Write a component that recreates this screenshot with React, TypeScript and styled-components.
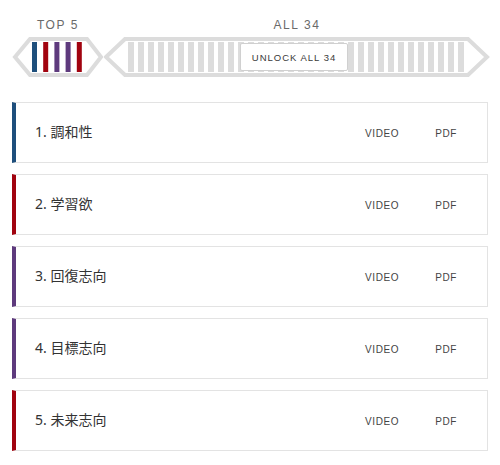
import styled, { createGlobalStyle } from "styled-components";

const GlobalStyle = createGlobalStyle`
    body {
        margin: 0;
        background: #ffffff;
        font-family: "Noto Sans", "Noto Sans CJK JP", sans-serif;
    }
`;

const Page = styled.div`
    width: 500px;
    padding: 19px 12px 0 12px;
    box-sizing: border-box;
`;

const Header = styled.div`
    display: flex;
    align-items: flex-start;
`;

const Group = styled.div<{ $width: number }>`
    width: ${props => props.$width}px;
    display: flex;
    flex-direction: column;
    align-items: center;
`;

const Label = styled.div`
    font-family: "Liberation Sans", Arial, sans-serif;
    font-size: 12px;
    line-height: 13px;
    letter-spacing: 1.6px;
    color: #6a6a6a;
    height: 13px;
    margin-bottom: 5px;
`;

const Track = styled.div`
    position: relative;
    line-height: 0;
`;

const UnlockButton = styled.button`
    position: absolute;
    left: 136px;
    top: 6px;
    width: 108px;
    height: 28px;
    background: #ffffff;
    border: 1px solid #d0d0d0;
    border-radius: 2px;
    font-family: "Liberation Sans", Arial, sans-serif;
    font-size: 9.5px;
    letter-spacing: 1px;
    color: #3a3a3a;
    padding: 0;
    cursor: pointer;
`;

const List = styled.ul`
    list-style: none;
    margin: 25px 0 0 0;
    padding: 0;
    display: flex;
    flex-direction: column;
    gap: 11px;
`;

const Card = styled.li<{ $color: string }>`
    height: 61px;
    box-sizing: border-box;
    width: 476px;
    border: 1px solid #e3e3e3;
    border-left: 4px solid ${props => props.$color};
    display: flex;
    align-items: center;
    padding: 0 30px 0 19px;
`;

const Name = styled.span`
    flex: 1;
    font-size: 14px;
    color: #333;
    margin-top: -3px;
`;

const Action = styled.a`
    font-family: "Liberation Sans", Arial, sans-serif;
    font-size: 10px;
    letter-spacing: 0.6px;
    color: #444;
    text-decoration: none;
    margin-top: 2px;
    & + & {
        margin-left: 36px;
    }
`;

const GRAY = "#dcdcdc";

interface IStrength {
    name: string;
    color: string;
}

const strengths: IStrength[] = [
    { name: "調和性", color: "#1e4f7c" },
    { name: "学習欲", color: "#a1030f" },
    { name: "回復志向", color: "#5e3a7d" },
    { name: "目標志向", color: "#5e3a7d" },
    { name: "未来志向", color: "#a1030f" },
];

function TopShape() {
    return (
        <svg width="92" height="40" viewBox="0 0 92 40">
            <polygon points="3,20 18,2 75,2 89,20 75,38 18,38" fill="none" stroke={GRAY} strokeWidth="4" />
            {strengths.map((s, i) => (
                <rect key={i} x={20 + i * 11.2} y="5" width="5" height="30" fill={s.color} />
            ))}
        </svg>
    );
}

function AllShape() {
    const bars = Array.from({ length: 34 }, (_, i) => i);
    return (
        <svg width="386" height="40" viewBox="0 0 386 40">
            <polygon points="2,20 21,2 364,2 383,20 364,38 21,38" fill="none" stroke={GRAY} strokeWidth="4" />
            {bars.map(i => (
                <rect key={i} x={24 + i * 10} y="5" width="6" height="30" fill={GRAY} />
            ))}
        </svg>
    );
}

function App() {
    return (
        <Page>
            <GlobalStyle />
            <Header>
                <Group $width={92}>
                    <Label>TOP 5</Label>
                    <Track>
                        <TopShape />
                    </Track>
                </Group>
                <Group $width={386}>
                    <Label>ALL 34</Label>
                    <Track>
                        <AllShape />
                        <UnlockButton>UNLOCK ALL 34</UnlockButton>
                    </Track>
                </Group>
            </Header>
            <List>
                {strengths.map((s, i) => (
                    <Card key={s.name} $color={s.color}>
                        <Name>{i + 1}. {s.name}</Name>
                        <Action href="#">VIDEO</Action>
                        <Action href="#">PDF</Action>
                    </Card>
                ))}
            </List>
        </Page>
    );
}
export default App;
